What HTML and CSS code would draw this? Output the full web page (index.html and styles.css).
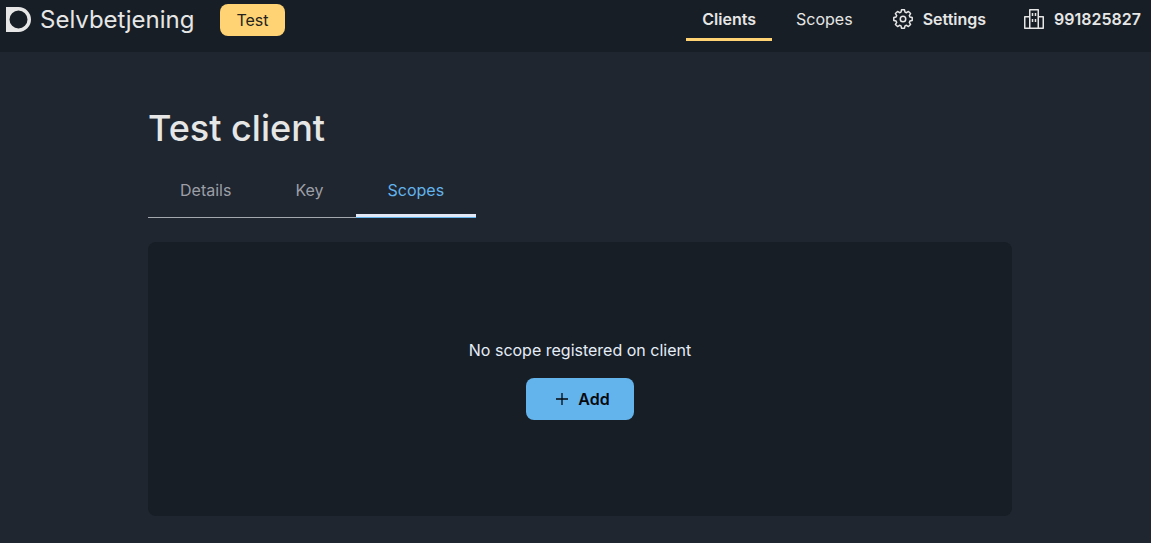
FILE: index.html
```html
<!DOCTYPE html>
<html lang="en">
<head>
<meta charset="utf-8">
<meta name="viewport" content="width=device-width, initial-scale=1">
<title>Selvbetjening</title>
<link rel="stylesheet" href="styles.css">
</head>
<body>
<header class="topbar">
  <a class="brand" href="#">
    <svg class="brand-mark" viewBox="0 0 25 25" aria-hidden="true"><path fill="currentColor" fill-rule="evenodd" d="M0 0H12.5a12.5 12.5 0 0 1 0 25H0ZM12.5 3.5a9 9 0 1 0 0 18a9 9 0 0 0 0-18Z"/></svg>
    <span>Selvbetjening</span>
  </a>
  <span class="env">Test</span>
  <nav class="nav">
    <a class="nav-link nav-link-active" href="#" aria-current="page">Clients</a>
    <a class="nav-link" href="#">Scopes</a>
    <button class="nav-button" type="button">
      <svg class="icon" viewBox="0 0 24 24" aria-hidden="true"><path d="M10 5.1L10.5 2.8H13.5L14 5.1L15.46 5.71L17.44 4.43L19.57 6.56L18.29 8.54L18.9 10L21.2 10.5V13.5L18.9 14L18.29 15.46L19.57 17.44L17.44 19.57L15.46 18.29L14 18.9L13.5 21.2H10.5L10 18.9L8.54 18.29L6.56 19.57L4.43 17.44L5.71 15.46L5.1 14L2.8 13.5V10.5L5.1 10L5.71 8.54L4.43 6.56L6.56 4.43L8.54 5.71Z"/><circle cx="12" cy="12" r="2.75"/></svg>
      <span>Settings</span>
    </button>
    <button class="nav-button" type="button">
      <svg class="icon" viewBox="0 0 24 24" aria-hidden="true"><path d="M7.75 21.25V2.75H16.25V21.25M7.75 9.75H2.75V21.25H21.25V9.75H16.25M10.5 6V9M13.5 6V9M10.5 12V15M13.5 12V15"/></svg>
      <span>991825827</span>
    </button>
  </nav>
</header>
<main class="page">
  <h1 class="title">Test client</h1>
  <div class="tabs" role="tablist">
    <button class="tab" type="button" role="tab" aria-selected="false">Details</button>
    <button class="tab" type="button" role="tab" aria-selected="false">Key</button>
    <button class="tab tab-active" type="button" role="tab" aria-selected="true">Scopes</button>
  </div>
  <section class="card">
    <p class="message">No scope registered on client</p>
    <button class="add" type="button">
      <svg class="icon add-icon" viewBox="0 0 24 24" aria-hidden="true"><path d="M12 6V18M6 12H18"/></svg>
      <span>Add</span>
    </button>
  </section>
</main>
</body>
</html>
```
FILE: styles.css
```css
* { box-sizing: border-box; }

body {
  margin: 0;
  background: #1f262f;
  color: #e6e6e6;
  font: 16px/24px Inter, "Liberation Sans", sans-serif;
}

button {
  border: 0;
  background: none;
  color: inherit;
  font: inherit;
  cursor: pointer;
}

.topbar {
  display: flex;
  align-items: flex-start;
  height: 52px;
  padding: 0 10px 0 6px;
  background: #171e25;
}

.brand {
  display: flex;
  align-items: center;
  gap: 9px;
  padding-top: 7px;
  margin-right: 26px;
  color: inherit;
  font-size: 24px;
  line-height: 25px;
  text-decoration: none;
}

.brand-mark { width: 25px; height: 25px; }

.env {
  margin-top: 4px;
  padding: 4px 16px;
  border-radius: 8px;
  background: #ffd373;
  color: #24241f;
}

.nav {
  display: flex;
  margin-left: auto;
}

.nav-link {
  margin-right: 8px;
  padding: 7px 16px;
  border-bottom: 3px solid transparent;
  color: inherit;
  text-decoration: none;
}

.nav-link-active {
  border-color: #ffd373;
  font-weight: 600;
}

.nav-button {
  display: flex;
  gap: 8px;
  margin-left: 14px;
  padding: 7px 0 8px;
  font-weight: 600;
}

.nav-button + .nav-button { margin-left: 36px; }

.icon {
  width: 24px;
  height: 24px;
  fill: none;
  stroke: currentColor;
  stroke-width: 1.5;
  stroke-linejoin: round;
}

.add-icon { stroke-width: 1.3; }

.page { padding: 52px 139px 27px 148px; }

.title {
  margin: 0 0 14px;
  font-size: 36px;
  font-weight: 500;
  line-height: 48px;
}

.tabs {
  display: flex;
  width: max-content;
  margin-bottom: 24px;
}

.tab {
  padding: 12px 32px 15px;
  border-bottom: 1px solid #a3a7ae;
  color: #9c9fa8;
}

.tab-active {
  border-color: #63b3ed;
  box-shadow: inset 0 -3px #e2e8f5;
  color: #63b3ed;
}

.card {
  display: flex;
  flex-direction: column;
  align-items: center;
  gap: 16px;
  padding: 96px 32px;
  border-radius: 8px;
  background: #171e25;
}

.message {
  margin: 0;
  color: #e5edf8;
}

.add {
  display: flex;
  align-items: center;
  gap: 4px;
  padding: 9px 24px;
  border-radius: 8px;
  background: #63b3ed;
  color: #05090d;
  font-weight: 600;
}
```
